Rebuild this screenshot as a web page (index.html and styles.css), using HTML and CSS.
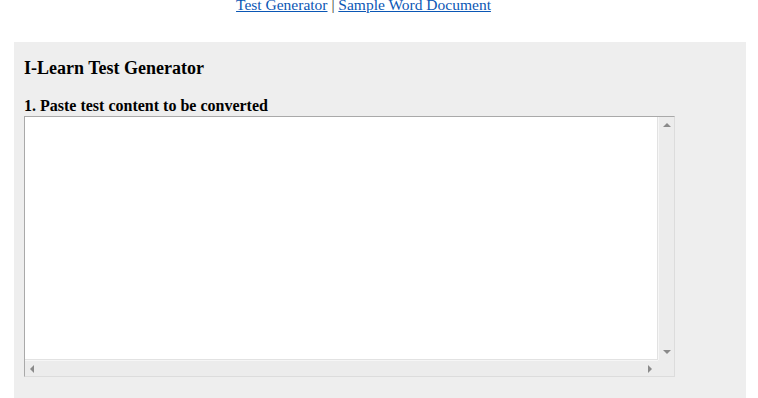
FILE: index.html
```html
<!DOCTYPE html>
<html>
<head>
<meta charset="utf-8">
<link rel="stylesheet" href="styles.css">
</head>
<body>
<div class="nav">
  <a href="#">Test Generator</a> | <a href="#">Sample Word Document</a>
</div>
<div class="panel">
  <h3 class="title">I-Learn Test Generator</h3>
  <div class="label">1. Paste test content to be converted</div>
  <div class="textbox">
    <div class="area"></div>
    <div class="vbar">
      <span class="arrow up"></span>
      <span class="track"></span>
      <span class="arrow down"></span>
    </div>
    <div class="hbar">
      <span class="arrow left"></span>
      <span class="track"></span>
      <span class="arrow right"></span>
    </div>
    <div class="corner"></div>
  </div>
</div>
</body>
</html>
```
FILE: styles.css
```css
html, body {
  margin: 0;
  padding: 0;
  background: #ffffff;
  font-family: "Liberation Serif", "Times New Roman", serif;
  color: #000;
  overflow: hidden;
}
.nav {
  height: 42px;
  box-sizing: border-box;
  margin-top: -4px;
  padding-right: 31px;
  text-align: center;
  font-size: 15.5px;
  line-height: 18px;
  color: #333;
}
.nav a {
  color: #0b57b5;
  text-decoration: underline;
}
.panel {
  margin: 4px 12px 0 14px;
  background: #eeeeee;
  padding: 15px 10px 0 10px;
  height: 360px;
  box-sizing: border-box;
}
.title {
  margin: 0;
  font-size: 18px;
  font-weight: bold;
  line-height: 22px;
}
.label {
  margin-top: 18px;
  font-size: 16px;
  font-weight: bold;
  line-height: 18px;
}
.textbox {
  margin-top: 1px;
  width: 651px;
  height: 261px;
  box-sizing: border-box;
  border: 1px solid #a9a9a9;
  border-right-color: #dcdcdc;
  border-bottom-color: #dcdcdc;
  display: grid;
  grid-template-columns: 1fr 16px;
  grid-template-rows: 1fr 16px;
  background: #ffffff;
}
.area {
  background: #fff;
  border-right: 1px solid #e2e2e2;
  border-bottom: 1px solid #e2e2e2;
}
.vbar {
  background: #ececec;
  border-left: 1px solid #f6f6f6;
  display: flex;
  flex-direction: column;
  align-items: center;
}
.hbar {
  background: #ececec;
  border-top: 1px solid #f6f6f6;
  display: flex;
  align-items: center;
}
.corner {
  background: #ececec;
}
.track { flex: 1; }
.arrow {
  width: 0;
  height: 0;
  display: block;
}
.vbar .arrow.up {
  margin-top: 6px;
  border-left: 4px solid transparent;
  border-right: 4px solid transparent;
  border-bottom: 4px solid #8a8a8a;
}
.vbar .arrow.down {
  margin-bottom: 6px;
  border-left: 4px solid transparent;
  border-right: 4px solid transparent;
  border-top: 4px solid #8a8a8a;
}
.hbar .arrow.left {
  margin-left: 5px;
  border-top: 4px solid transparent;
  border-bottom: 4px solid transparent;
  border-right: 4px solid #8a8a8a;
}
.hbar .arrow.right {
  margin-right: 6px;
  border-top: 4px solid transparent;
  border-bottom: 4px solid transparent;
  border-left: 4px solid #8a8a8a;
}
```
